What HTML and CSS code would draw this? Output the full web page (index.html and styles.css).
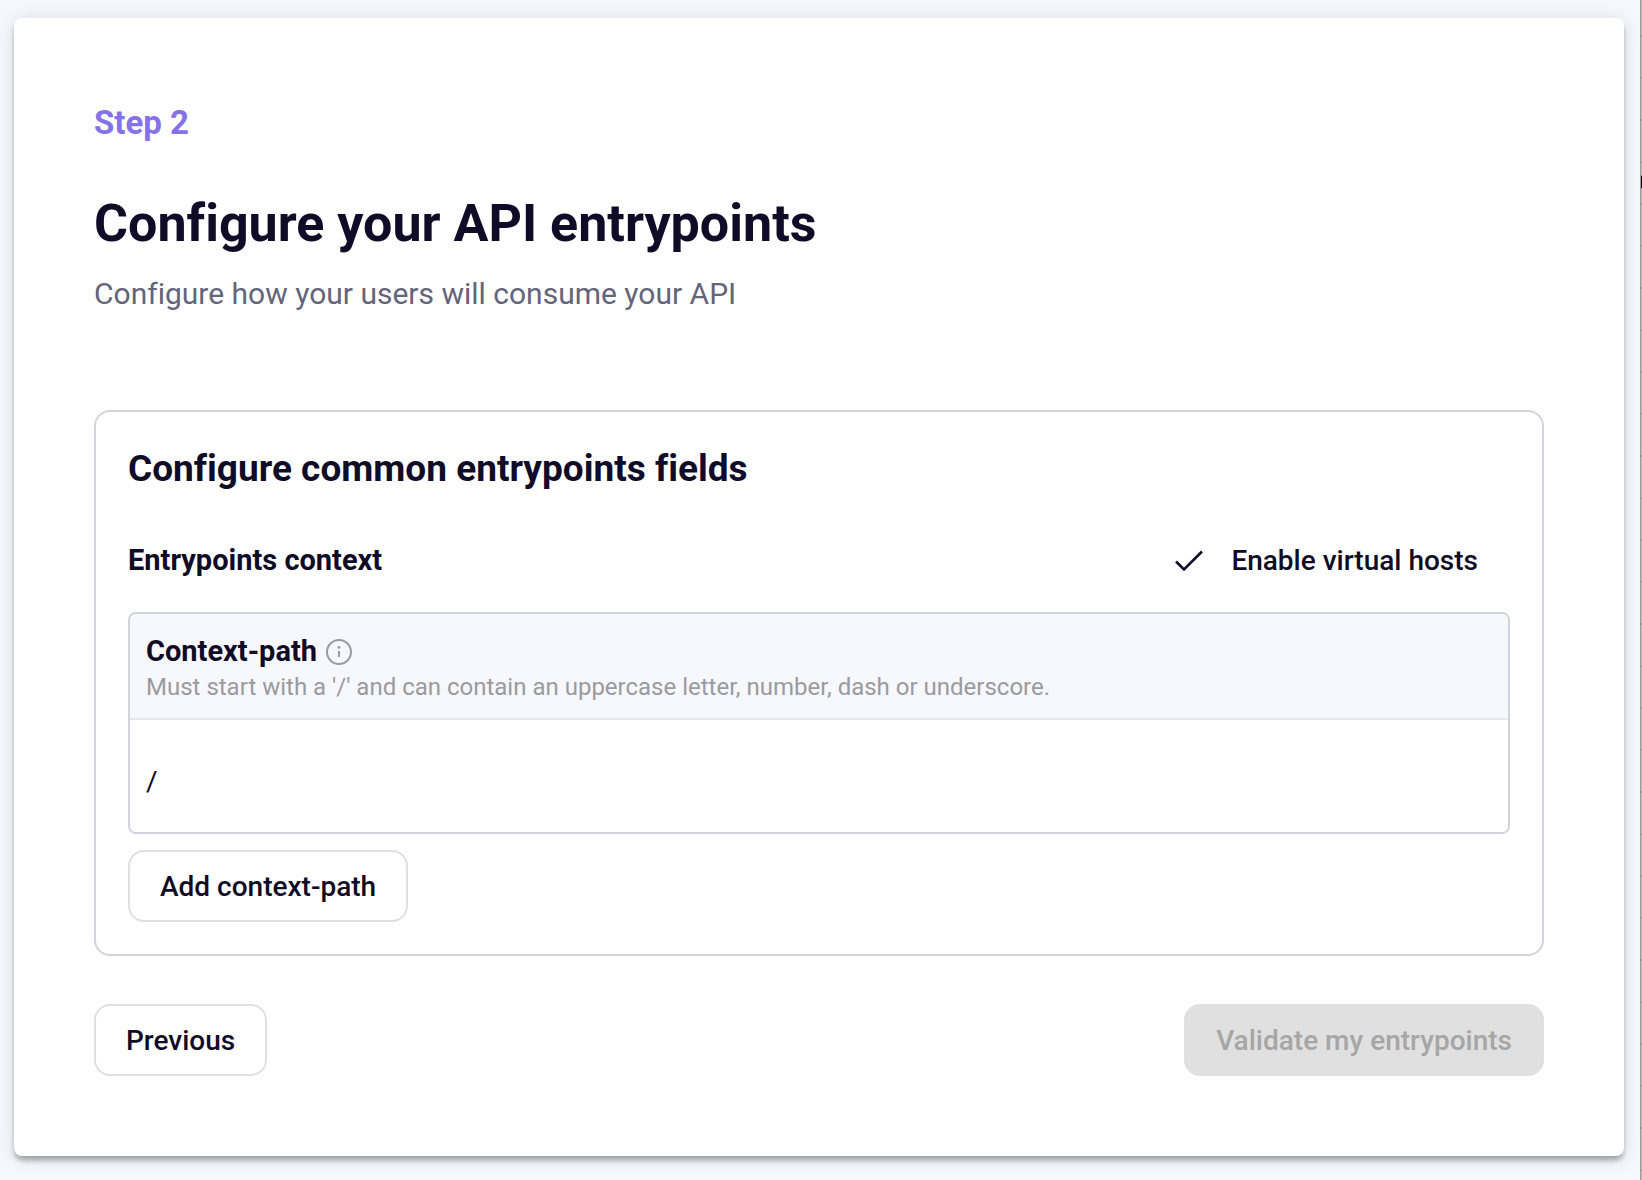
FILE: index.html
```html
<!DOCTYPE html>
<html lang="en">
<head>
<meta charset="utf-8">
<title>Configure your API entrypoints</title>
<link rel="stylesheet" href="styles.css">
</head>
<body>
<div class="page">
  <main class="card">
    <header class="intro">
      <p class="step">Step 2</p>
      <h1 class="title">Configure your API entrypoints</h1>
      <p class="subtitle">Configure how your users will consume your API</p>
    </header>
    <form class="form">
      <section class="panel">
        <h2 class="panel-title">Configure common entrypoints fields</h2>
        <div class="context-row">
          <h3 class="context-title">Entrypoints context</h3>
          <button type="button" class="btn btn-text">
            <svg class="check" viewBox="0 0 40 40" aria-hidden="true"><path d="M7 20.5 L15 28.5 L33 10.5"/></svg>
            <span>Enable virtual hosts</span>
          </button>
        </div>
        <div class="paths">
          <table class="paths-table">
            <thead>
              <tr>
                <th scope="col">
                  <div class="column-name">
                    <label for="path">Context-path</label>
                    <svg class="info" viewBox="0 0 28 28" aria-hidden="true"><circle cx="14" cy="15" r="12"/><path d="M14 14V20"/><circle class="dot" cx="14" cy="10.4" r="1.4"/></svg>
                  </div>
                  <p class="hint">Must start with a '/' and can contain an uppercase letter, number, dash or underscore.</p>
                </th>
              </tr>
            </thead>
            <tbody>
              <tr><td><input class="path-input" id="path" type="text" value="/"></td></tr>
            </tbody>
          </table>
        </div>
        <button type="button" class="btn add">Add context-path</button>
      </section>
      <footer class="actions">
        <button type="button" class="btn">Previous</button>
        <button type="submit" class="btn btn-primary" disabled>Validate my entrypoints</button>
      </footer>
    </form>
  </main>
  <div class="edge" aria-hidden="true"></div>
</div>
</body>
</html>
```

FILE: styles.css
```css
* {
  box-sizing: border-box;
}

body {
  margin: 0;
  background: #f7f8fd;
  color: #100c27;
  font-family: Roboto, "Liberation Sans", sans-serif;
  font-size: 28px;
  font-variant-ligatures: none;
  line-height: 40px;
}

h1, h2, h3, p {
  margin: 0;
}

.page {
  display: flex;
  min-height: 100vh;
}

.card {
  flex: 1;
  align-self: flex-start;
  margin: 18px 16px 24px 14px;
  padding: 80px;
  border-radius: 8px;
  background: #fff;
  box-shadow: 0 6px 6px -2px rgba(0, 0, 0, .2), 0 4px 4px rgba(0, 0, 0, .14), 0 2px 20px rgba(0, 0, 0, .12);
}

.edge {
  width: 2px;
  border-left: 1px solid #9b9d9b;
  background:
    radial-gradient(ellipse 3px 7px at 0 182px, #000 80%, transparent),
    repeating-linear-gradient(#bcbebc 0 35px, #999b99 35px 37px, #bcbebc 37px 42px);
}

.intro {
  margin-bottom: 96px;
}

.step {
  margin-bottom: 44px;
  color: #8571e8;
  font-size: 33px;
  font-weight: 700;
  line-height: 50px;
}

.title {
  margin-bottom: 18px;
  font-size: 52px;
  font-weight: 700;
  line-height: 64px;
}

.subtitle {
  color: #64647a;
  font-size: 30px;
}

.panel {
  padding: 32px;
  border: 2px solid #d3d3dc;
  border-radius: 16px;
}

.panel-title {
  margin-bottom: 30px;
  font-size: 37px;
  font-weight: 700;
  line-height: 50px;
}

.context-row {
  display: flex;
  align-items: center;
  justify-content: space-between;
  margin-bottom: 16px;
}

.context-title,
.column-name {
  font-size: 29px;
  font-weight: 700;
}

.btn {
  display: inline-flex;
  align-items: center;
  justify-content: center;
  height: 72px;
  padding: 2px 30px 0;
  border: 2px solid #e0e0e0;
  border-radius: 16px;
  background: #fff;
  color: inherit;
  font: inherit;
  font-weight: 500;
}

.btn-text {
  gap: 22px;
  border-color: transparent;
}

.btn-primary:disabled {
  background: #e0e0e0;
  color: #a6a6a6;
}

.check {
  width: 40px;
  height: 40px;
  fill: none;
  stroke: currentColor;
  stroke-width: 2.6;
}

.paths {
  margin-bottom: 16px;
  overflow: hidden;
  border: 2px solid #d3d3dc;
  border-radius: 8px;
}

.paths-table {
  width: 100%;
  border-collapse: separate;
  border-spacing: 0;
}

.paths-table th {
  padding: 17px 16px 15px;
  border-bottom: 2px solid #e6e6ee;
  background: #f7f8fd;
  text-align: left;
}

.column-name {
  display: flex;
  align-items: center;
  gap: 8px;
}

.info {
  width: 28px;
  height: 28px;
  fill: none;
  stroke: #9a9a9f;
  stroke-width: 2;
}

.info .dot {
  fill: #9a9a9f;
  stroke: none;
}

.hint {
  color: #9a9a9f;
  font-size: 24px;
  font-weight: 400;
  line-height: 32px;
}

.paths-table td {
  padding: 0;
}

.path-input {
  display: block;
  width: 100%;
  height: 112px;
  padding: 10px 16px 0;
  border: 0;
  background: #fff;
  color: inherit;
  font: inherit;
}

.add {
  display: flex;
}

.actions {
  display: flex;
  justify-content: space-between;
  margin-top: 48px;
}
```
